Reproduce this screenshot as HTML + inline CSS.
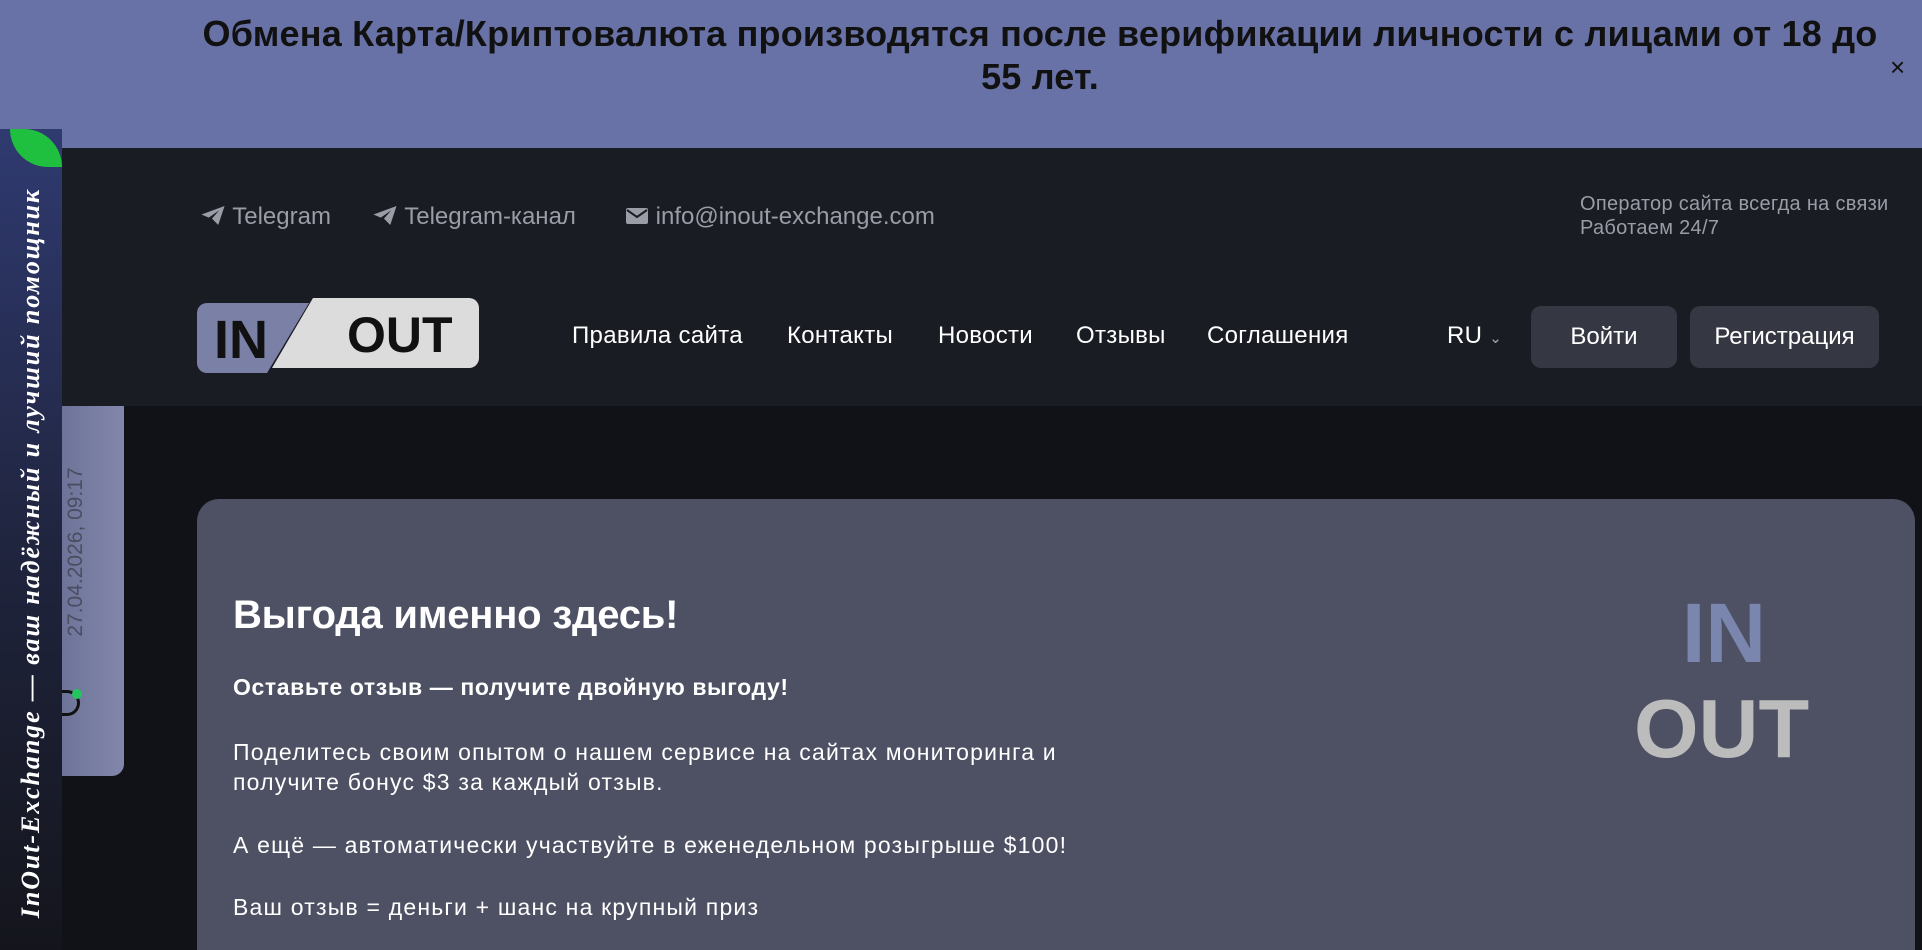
<!DOCTYPE html>
<html><head><meta charset="utf-8"><style>
*{margin:0;padding:0;box-sizing:border-box}
html,body{width:1922px;height:950px;overflow:hidden}
body{background:#111218;font-family:"Liberation Sans","Noto Sans CJK SC",sans-serif;position:relative}
.banner{position:absolute;left:0;top:0;width:1922px;height:148px;background:#6872a6;color:#111;font-weight:bold;font-size:36px;text-align:center;line-height:43px;padding:12px 0 0 180px;letter-spacing:0.2px}
.banner .t{width:1720px}
.close{position:absolute;left:1890px;top:52px;font-size:26px;font-weight:normal;color:#111}
.header{position:absolute;left:0;top:148px;width:1922px;height:258px;background:#1a1c24}
.c{position:absolute;color:#9a9ca6;font-size:24px}
.nav{position:absolute;top:322px;color:#fff;font-size:24px;letter-spacing:0.3px}
.btn{position:absolute;top:306px;height:62px;background:#353842;border-radius:10px;color:#fff;font-size:24px;text-align:center;line-height:62px}
.side{position:absolute;left:0;top:129px;width:62px;height:821px;background:linear-gradient(#2f3a70,#20253f 50%,#14151c)}
.leaf{position:absolute;left:10px;top:129px;width:52px;height:38px;background:#1fc03f;border-radius:0 40px 0 40px}
.vt{position:absolute;left:31px;top:553px;transform:translate(-50%,-50%) rotate(-90deg);white-space:nowrap;color:#fff;font-family:"Liberation Serif",serif;font-style:italic;font-weight:bold;font-size:26px;letter-spacing:1.9px}
.widget{position:absolute;left:62px;top:406px;width:62px;height:370px;background:linear-gradient(90deg,#6e7499,#8286aa);border-radius:0 0 12px 0}
.date{position:absolute;left:76px;top:552px;transform:translate(-50%,-50%) rotate(-90deg);white-space:nowrap;color:#4a4d60;font-size:21px}
.card{position:absolute;left:197px;top:499px;width:1718px;height:451px;background:#4e5164;border-radius:22px 22px 0 0}
.p{position:absolute;left:233px;color:#fff;font-size:23px;letter-spacing:1.2px;white-space:nowrap}
</style></head><body>
<div class="banner"><div class="t">Обмена Карта/Криптовалюта производятся после верификации личности с лицами от 18 до<br>55 лет.</div></div>
<div class="close">×</div>
<div class="header"></div>
<div class="c" style="left:200px;top:203px"><svg width="26" height="21" viewBox="0 0 24 20" style="vertical-align:-2px"><path d="M1 9L23 1 17 19 11 13 18 5 8 12Z" fill="#9a9ca6"/></svg> Telegram</div>
<div class="c" style="left:372px;top:203px"><svg width="26" height="21" viewBox="0 0 24 20" style="vertical-align:-2px"><path d="M1 9L23 1 17 19 11 13 18 5 8 12Z" fill="#9a9ca6"/></svg> Telegram-канал</div>
<div class="c" style="left:625px;top:203px"><svg width="24" height="18" viewBox="0 0 24 18" style="vertical-align:-1px"><rect x="1" y="1" width="22" height="16" rx="2" fill="#9a9ca6"/><path d="M2 3L12 10 22 3" stroke="#1a1c24" stroke-width="2" fill="none"/></svg> info@inout-exchange.com</div>
<div class="c" style="left:1580px;top:192px;font-size:20px;line-height:24px;letter-spacing:0.3px">Оператор сайта всегда на связи<br>Работаем 24/7</div>
<svg style="position:absolute;left:197px;top:298px" width="282" height="76" viewBox="0 0 282 76">
<path d="M10 5H112L70 75H10A10 10 0 0 1 0 65V15A10 10 0 0 1 10 5Z" fill="#7a80a6"/>
<path d="M116 0H272A10 10 0 0 1 282 10V60A10 10 0 0 1 272 70H75Z" fill="#dcdcdc"/>
<text x="17" y="60" font-family="Liberation Sans" font-weight="bold" font-size="54" fill="#111">IN</text>
<text x="150" y="54" font-family="Liberation Sans" font-weight="bold" font-size="50" fill="#111">OUT</text>
</svg>
<div class="nav" style="left:572px">Правила сайта</div>
<div class="nav" style="left:787px">Контакты</div>
<div class="nav" style="left:938px">Новости</div>
<div class="nav" style="left:1076px">Отзывы</div>
<div class="nav" style="left:1207px">Соглашения</div>
<div class="nav" style="left:1447px">RU <span style="font-size:15px;color:#aaa">&#8964;</span></div>
<div class="btn" style="left:1531px;width:146px">Войти</div>
<div class="btn" style="left:1690px;width:189px">Регистрация</div>
<div class="widget"></div>
<div class="date">27.04.2026, 09:17</div>
<div style="position:absolute;left:62px;top:690px;width:18px;height:26px;border:3px solid #111;border-left:none;border-radius:0 14px 14px 0"></div>
<div style="position:absolute;left:72px;top:689px;width:10px;height:10px;background:#22c55e;border-radius:50%"></div>
<div class="side"></div>
<div class="leaf"></div>
<div class="vt">InOut-Exchange — ваш надёжный и лучший помощник</div>
<div class="card"></div>
<div class="p" style="top:593px;font-size:40px;font-weight:bold;letter-spacing:-0.2px">Выгода именно здесь!</div>
<div class="p" style="top:674px;font-weight:bold;letter-spacing:0.6px">Оставьте отзыв — получите двойную выгоду!</div>
<div class="p" style="top:737px;line-height:30px">Поделитесь своим опытом о нашем сервисе на сайтах мониторинга и<br>получите бонус $3 за каждый отзыв.</div>
<div class="p" style="top:832px">А ещё — автоматически участвуйте в еженедельном розыгрыше $100!</div>
<div class="p" style="top:894px">Ваш отзыв = деньги + шанс на крупный приз</div>
<div style="position:absolute;left:1682px;top:585px;font-size:84px;font-weight:bold;color:#7a86ad">IN</div>
<div style="position:absolute;left:1634px;top:681px;font-size:83px;font-weight:bold;color:#bcbcbc">OUT</div>
</body></html>
